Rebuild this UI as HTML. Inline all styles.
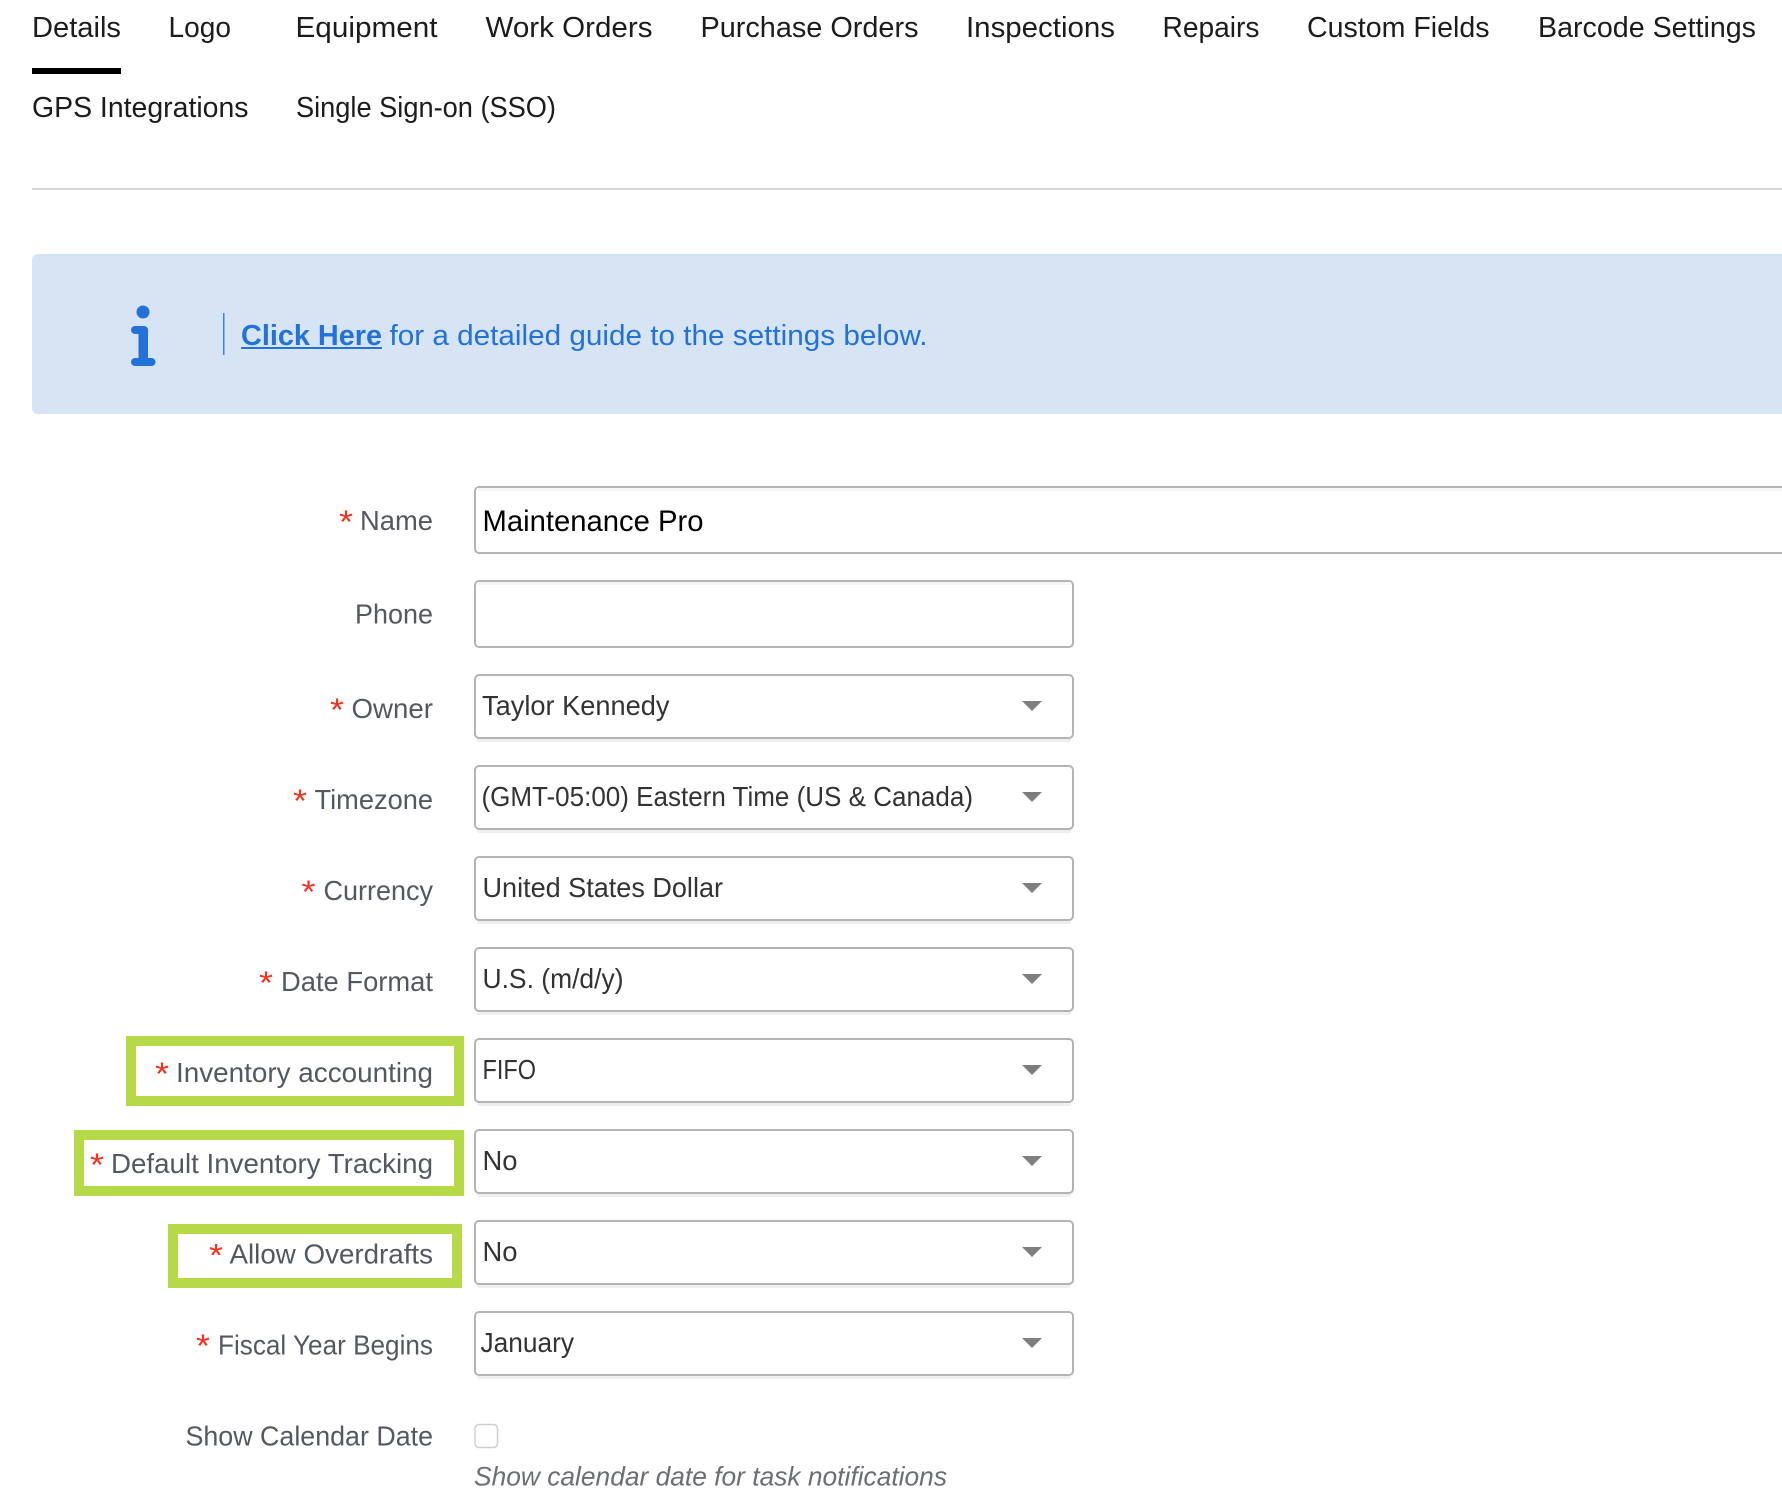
<!DOCTYPE html>
<html lang="en">
<head>
<meta charset="utf-8">
<title>Details</title>
<style>
html,body{margin:0;padding:0;background:#fff;width:1782px;height:1512px;overflow:hidden}
svg{position:absolute;left:0;top:0;display:block}
text{font-family:"Liberation Sans",sans-serif;white-space:pre}
.tab{font-size:29px;fill:#1c1c1c}
.lab{font-size:27.500px;fill:#54595f}
.star{font-size:32px;fill:#f5301e}
.sel{font-size:27.500px;fill:#333}
.box{fill:#fff;stroke:#b4b4b4;stroke-width:2}
.sh{fill:#efefef}
.arr{fill:#7f7f7f}
.grn{fill:#fff;stroke:#b5d947;stroke-width:10}
</style>
</head>
<body>
<svg width="1782" height="1512" viewBox="0 0 1782 1512" xmlns="http://www.w3.org/2000/svg">
<rect width="1782" height="1512" fill="#fff"/>

<!-- tabs -->
<g class="tabs">
<text class="tab" x="32" y="37" textLength="89" lengthAdjust="spacingAndGlyphs">Details</text>
<text class="tab" x="168.500" y="37" textLength="62.500" lengthAdjust="spacingAndGlyphs">Logo</text>
<text class="tab" x="295.500" y="37" textLength="142" lengthAdjust="spacingAndGlyphs">Equipment</text>
<text class="tab" x="485.500" y="37" textLength="167" lengthAdjust="spacingAndGlyphs">Work Orders</text>
<text class="tab" x="700.500" y="37" textLength="218" lengthAdjust="spacingAndGlyphs">Purchase Orders</text>
<text class="tab" x="966" y="37" textLength="149" lengthAdjust="spacingAndGlyphs">Inspections</text>
<text class="tab" x="1162.500" y="37" textLength="97" lengthAdjust="spacingAndGlyphs">Repairs</text>
<text class="tab" x="1307" y="37" textLength="182.500" lengthAdjust="spacingAndGlyphs">Custom Fields</text>
<text class="tab" x="1538" y="37" textLength="218" lengthAdjust="spacingAndGlyphs">Barcode Settings</text>
<text class="tab" x="32" y="117" textLength="216.500" lengthAdjust="spacingAndGlyphs">GPS Integrations</text>
<text class="tab" x="296" y="117" textLength="260" lengthAdjust="spacingAndGlyphs">Single Sign-on (SSO)</text>
</g>
<rect x="32" y="68" width="89" height="6" fill="#000"/>
<rect x="32" y="188" width="1750" height="2" fill="#d6d6d6"/>

<!-- banner -->
<path d="M38 254H1782V414H38a6 6 0 0 1-6-6V260a6 6 0 0 1 6-6z" fill="#d6e4f4"/>
<circle cx="143" cy="312" r="6.500" fill="#2272d9"/>
<path d="M135 326h9a4 4 0 0 1 4 4v28h3.500a4 4 0 0 1 0 8h-16.500a4 4 0 0 1 0-8h3.500v-24h-3.500a4 4 0 0 1 0-8z" fill="#2272d9"/>
<rect x="223" y="313" width="1.500" height="42" fill="#3f83de"/>
<text x="241" y="345" font-size="29" font-weight="700" fill="#2272d9" textLength="141" lengthAdjust="spacingAndGlyphs">Click Here</text>
<rect x="241" y="347" width="141" height="2" fill="#2272d9"/>
<text x="389.500" y="345" font-size="29" fill="#2272d9" textLength="538" lengthAdjust="spacingAndGlyphs">for a detailed guide to the settings below.</text>

<!-- green highlight boxes -->
<rect class="grn" x="131" y="1041" width="328" height="60"/>
<rect class="grn" x="79" y="1135" width="380" height="56"/>
<rect class="grn" x="173" y="1229" width="284" height="54"/>

<!-- name / phone inputs -->
<rect x="475" y="487" width="1320" height="66" rx="4" class="box"/>
<rect x="477" y="488" width="1305" height="3" fill="#f6f6f6"/>
<text x="482.500" y="531" font-size="29.500" fill="#000" textLength="221" lengthAdjust="spacingAndGlyphs">Maintenance Pro</text>

<rect x="475" y="581" width="598" height="66" rx="4" class="box"/>
<rect x="477" y="582" width="594" height="3" fill="#f6f6f6"/>

<!-- selects -->
<g>
<rect class="sh" x="477" y="737" width="594" height="5" rx="2"/>
<rect x="475" y="675" width="598" height="63" rx="4" class="box"/>
<path class="arr" d="M1022 701h20l-10 10z"/>
<text class="sel" x="482" y="715" textLength="187.500" lengthAdjust="spacingAndGlyphs">Taylor Kennedy</text>

<rect class="sh" x="477" y="828" width="594" height="5" rx="2"/>
<rect x="475" y="766" width="598" height="63" rx="4" class="box"/>
<path class="arr" d="M1022 792h20l-10 10z"/>
<text class="sel" x="481.500" y="806" textLength="491.500" lengthAdjust="spacingAndGlyphs">(GMT-05:00) Eastern Time (US &amp; Canada)</text>

<rect class="sh" x="477" y="919" width="594" height="5" rx="2"/>
<rect x="475" y="857" width="598" height="63" rx="4" class="box"/>
<path class="arr" d="M1022 883h20l-10 10z"/>
<text class="sel" x="482.500" y="897" textLength="240.500" lengthAdjust="spacingAndGlyphs">United States Dollar</text>

<rect class="sh" x="477" y="1010" width="594" height="5" rx="2"/>
<rect x="475" y="948" width="598" height="63" rx="4" class="box"/>
<path class="arr" d="M1022 974h20l-10 10z"/>
<text class="sel" x="482.500" y="988" textLength="141" lengthAdjust="spacingAndGlyphs">U.S. (m/d/y)</text>

<rect class="sh" x="477" y="1101" width="594" height="5" rx="2"/>
<rect x="475" y="1039" width="598" height="63" rx="4" class="box"/>
<path class="arr" d="M1022 1065h20l-10 10z"/>
<text class="sel" x="482.500" y="1079" textLength="53.500" lengthAdjust="spacingAndGlyphs">FIFO</text>

<rect class="sh" x="477" y="1192" width="594" height="5" rx="2"/>
<rect x="475" y="1130" width="598" height="63" rx="4" class="box"/>
<path class="arr" d="M1022 1156h20l-10 10z"/>
<text class="sel" x="482.500" y="1170" textLength="35" lengthAdjust="spacingAndGlyphs">No</text>

<rect class="sh" x="477" y="1283" width="594" height="5" rx="2"/>
<rect x="475" y="1221" width="598" height="63" rx="4" class="box"/>
<path class="arr" d="M1022 1247h20l-10 10z"/>
<text class="sel" x="482.500" y="1261" textLength="35" lengthAdjust="spacingAndGlyphs">No</text>

<rect class="sh" x="477" y="1374" width="594" height="5" rx="2"/>
<rect x="475" y="1312" width="598" height="63" rx="4" class="box"/>
<path class="arr" d="M1022 1338h20l-10 10z"/>
<text class="sel" x="480.500" y="1352" textLength="93.500" lengthAdjust="spacingAndGlyphs">January</text>
</g>

<!-- labels -->
<g>
<text class="star" x="339" y="533" textLength="14" lengthAdjust="spacingAndGlyphs">*</text>
<text class="lab" x="360" y="530" textLength="73" lengthAdjust="spacingAndGlyphs">Name</text>
<text class="lab" x="355" y="623.500" textLength="78" lengthAdjust="spacingAndGlyphs">Phone</text>
<text class="star" x="330" y="721" textLength="14" lengthAdjust="spacingAndGlyphs">*</text>
<text class="lab" x="351.500" y="718" textLength="81.500" lengthAdjust="spacingAndGlyphs">Owner</text>
<text class="star" x="293" y="812" textLength="14" lengthAdjust="spacingAndGlyphs">*</text>
<text class="lab" x="314.500" y="809" textLength="118.500" lengthAdjust="spacingAndGlyphs">Timezone</text>
<text class="star" x="301.500" y="903" textLength="14" lengthAdjust="spacingAndGlyphs">*</text>
<text class="lab" x="323.500" y="900" textLength="109.500" lengthAdjust="spacingAndGlyphs">Currency</text>
<text class="star" x="259" y="994" textLength="14" lengthAdjust="spacingAndGlyphs">*</text>
<text class="lab" x="281" y="991" textLength="152" lengthAdjust="spacingAndGlyphs">Date Format</text>
<text class="star" x="155" y="1085" textLength="14" lengthAdjust="spacingAndGlyphs">*</text>
<text class="lab" x="176" y="1082" textLength="257" lengthAdjust="spacingAndGlyphs">Inventory accounting</text>
<text class="star" x="90" y="1176" textLength="14" lengthAdjust="spacingAndGlyphs">*</text>
<text class="lab" x="111" y="1173" textLength="322" lengthAdjust="spacingAndGlyphs">Default Inventory Tracking</text>
<text class="star" x="209" y="1266.500" textLength="14" lengthAdjust="spacingAndGlyphs">*</text>
<text class="lab" x="229.500" y="1263.500" textLength="203.500" lengthAdjust="spacingAndGlyphs">Allow Overdrafts</text>
<text class="star" x="196" y="1357" textLength="14" lengthAdjust="spacingAndGlyphs">*</text>
<text class="lab" x="218" y="1354.500" textLength="215" lengthAdjust="spacingAndGlyphs">Fiscal Year Begins</text>
<text class="lab" x="185.500" y="1445.500" textLength="247.500" lengthAdjust="spacingAndGlyphs">Show Calendar Date</text>
</g>

<!-- checkbox -->
<rect x="475" y="1424.500" width="22.500" height="23" rx="4" fill="#fff" stroke="#d0d0d0" stroke-width="1.500"/>
<text x="474" y="1485.500" font-size="26.500" font-style="italic" fill="#6b6f74" textLength="473" lengthAdjust="spacingAndGlyphs">Show calendar date for task notifications</text>
</svg>
</body>
</html>
